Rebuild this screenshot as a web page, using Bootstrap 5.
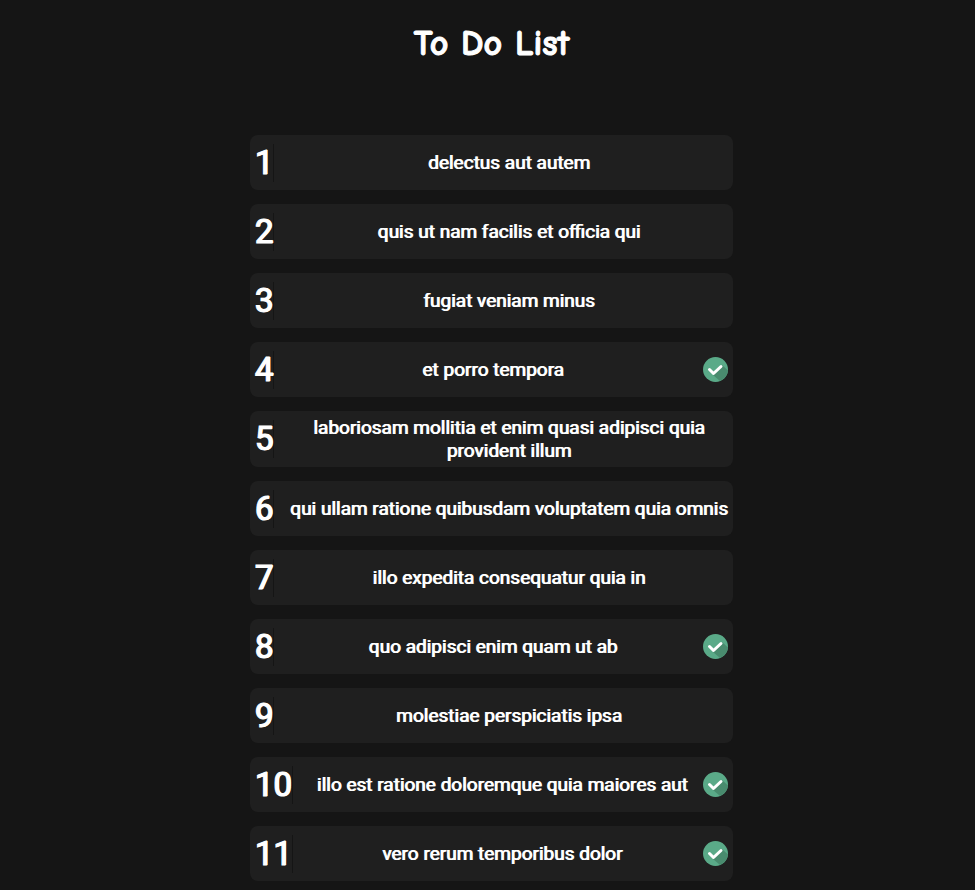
<!DOCTYPE html>
<html lang="en">
<head>
<meta charset="utf-8">
<meta name="viewport" content="width=device-width, initial-scale=1">
<title>To Do List</title>
<link href="https://cdn.jsdelivr.net/npm/bootstrap@5.3.0/dist/css/bootstrap.min.css" rel="stylesheet">
<style>
body { background: #151515; color: #fff; font-family: Roboto, "Noto Sans", sans-serif; }
.page-title { font-family: "Comic Neue", "Comic Sans MS", cursive; font-size: 36px; line-height: 44px; font-weight: 700; -webkit-text-stroke: 1px #fff; padding-top: 22px; margin-bottom: 69px; }
.todo-list { width: 50%; min-width: 300px; gap: 14px; }
.todo-item { background: #1f1f1f; border-radius: 8px; min-height: 55px; padding: 5px; }
.todo-number { font-size: 33px; line-height: 38px; font-weight: 400; -webkit-text-stroke: 1px #fff; text-shadow: 1px 0 0 #fff; border-right: 1px solid #151515; }
.todo-text { font-size: 19px; line-height: 23px; font-weight: 400; text-shadow: 1px 0 0 #fff; margin-left: 15px; }
.todo-check { width: 25px; height: 25px; margin-left: 7px; }
</style>
</head>
<body>
<svg class="d-none" aria-hidden="true">
<symbol id="check" viewBox="0 0 50 50">
<circle cx="25" cy="25" r="25" fill="#5aaa88"/>
<path d="M20 36 L34 48 Q48 42 50 27 L38 16 Z" fill="#498b6e"/>
<path d="M13 25 L21 33 L36 19" fill="none" stroke="#fff" stroke-width="6" stroke-linecap="round" stroke-linejoin="round"/>
</symbol>
</svg>
<main class="ps-2">
<h1 class="page-title text-center">To Do List</h1>
<ol class="todo-list list-unstyled d-flex flex-column mx-auto mb-2">
<li class="todo-item d-flex align-items-center"><span class="todo-number">1</span><p class="todo-text flex-grow-1 text-center mb-0">delectus aut autem</p></li>
<li class="todo-item d-flex align-items-center"><span class="todo-number">2</span><p class="todo-text flex-grow-1 text-center mb-0">quis ut nam facilis et officia qui</p></li>
<li class="todo-item d-flex align-items-center"><span class="todo-number">3</span><p class="todo-text flex-grow-1 text-center mb-0">fugiat veniam minus</p></li>
<li class="todo-item d-flex align-items-center"><span class="todo-number">4</span><p class="todo-text flex-grow-1 text-center mb-0">et porro tempora</p><svg class="todo-check flex-shrink-0" role="img" aria-label="Completed"><use href="#check"/></svg></li>
<li class="todo-item d-flex align-items-center"><span class="todo-number">5</span><p class="todo-text flex-grow-1 text-center mb-0">laboriosam mollitia et enim quasi adipisci quia provident illum</p></li>
<li class="todo-item d-flex align-items-center"><span class="todo-number">6</span><p class="todo-text flex-grow-1 text-center mb-0">qui ullam ratione quibusdam voluptatem quia omnis</p></li>
<li class="todo-item d-flex align-items-center"><span class="todo-number">7</span><p class="todo-text flex-grow-1 text-center mb-0">illo expedita consequatur quia in</p></li>
<li class="todo-item d-flex align-items-center"><span class="todo-number">8</span><p class="todo-text flex-grow-1 text-center mb-0">quo adipisci enim quam ut ab</p><svg class="todo-check flex-shrink-0" role="img" aria-label="Completed"><use href="#check"/></svg></li>
<li class="todo-item d-flex align-items-center"><span class="todo-number">9</span><p class="todo-text flex-grow-1 text-center mb-0">molestiae perspiciatis ipsa</p></li>
<li class="todo-item d-flex align-items-center"><span class="todo-number">10</span><p class="todo-text flex-grow-1 text-center mb-0">illo est ratione doloremque quia maiores aut</p><svg class="todo-check flex-shrink-0" role="img" aria-label="Completed"><use href="#check"/></svg></li>
<li class="todo-item d-flex align-items-center"><span class="todo-number">11</span><p class="todo-text flex-grow-1 text-center mb-0">vero rerum temporibus dolor</p><svg class="todo-check flex-shrink-0" role="img" aria-label="Completed"><use href="#check"/></svg></li>
</ol>
</main>
<script src="https://cdn.jsdelivr.net/npm/bootstrap@5.3.0/dist/js/bootstrap.bundle.min.js"></script>
</body>
</html>
